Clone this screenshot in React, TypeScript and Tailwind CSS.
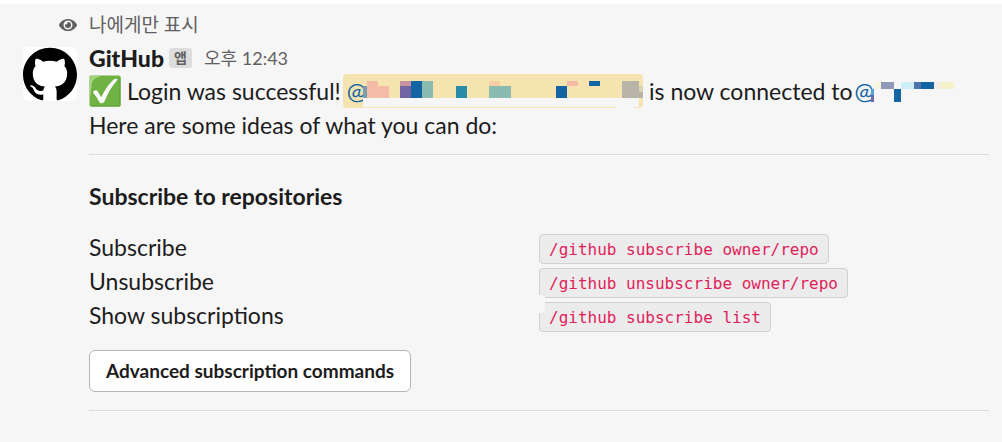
import React from "react";
import { FaEye } from "react-icons/fa";
import { SiGithub } from "react-icons/si";

type Block = [x: number, y: number, width: number, height: number, color: string];

const accountBlocks: Block[] = [
  [0, 24, 276, 9, "#f6f6f6"],
  [253, 33, 18, 1, "#f6f6f6"],
  [0, 12, 4, 12, "#7a9db0"],
  [4, 7, 11, 17, "#f4bba7"],
  [15, 12, 11, 12, "#f4bba7"],
  [37, 7, 11, 5, "#c893a1"],
  [37, 12, 11, 12, "#7264a2"],
  [48, 7, 11, 17, "#1264a3"],
  [59, 7, 11, 17, "#89bbb0"],
  [93, 12, 11, 12, "#268ca9"],
  [126, 7, 11, 5, "#f7cda5"],
  [126, 12, 22, 12, "#89bbb0"],
  [193, 12, 11, 12, "#1264a3"],
  [204, 7, 11, 5, "#f4bba7"],
  [226, 7, 11, 5, "#1264a3"],
  [259, 7, 17, 17, "#b8b4a8"],
  [276, 12, 4, 6, "#d6d6b2"],
  [276, 18, 4, 6, "#b8b4a8"],
];

const userBlocks: Block[] = [
  [0, 15, 3, 6, "#50a5dc"],
  [0, 21, 3, 7, "#7069a8"],
  [3, 8, 7, 7, "#f5f5e0"],
  [10, 8, 13, 7, "#9099b9"],
  [23, 15, 7, 13, "#1264a3"],
  [30, 8, 13, 7, "#d0eef8"],
  [43, 8, 7, 7, "#4d75aa"],
  [50, 8, 13, 7, "#1264a3"],
  [63, 8, 7, 7, "#f6eee6"],
  [70, 8, 13, 7, "#f6f2cc"],
];

const commands = [
  { label: "Subscribe", command: "/github subscribe owner/repo" },
  { label: "Unsubscribe", command: "/github unsubscribe owner/repo" },
  { label: "Show subscriptions", command: "/github subscribe list" },
];

const Blocks = ({ blocks, width }: { blocks: Block[]; width: number }) => (
  <svg
    width={width}
    height={34}
    viewBox={`0 0 ${width} 34`}
    className="-ml-[3px] shrink-0"
    shapeRendering="crispEdges"
    aria-hidden="true"
  >
    {blocks.map(([x, y, w, h, color]) => (
      <rect key={`${x}-${y}`} x={x} y={y} width={w} height={h} fill={color} />
    ))}
  </svg>
);

const CheckMark = () => (
  <svg width="32" height="32" viewBox="0 0 32 32" className="shrink-0" aria-hidden="true">
    <rect x="0.5" y="0.5" width="31" height="31" rx="1.5" fill="#70b344" />
    <path d="M1 24V2.500Q1 1 2.500 1H12Q4 3 3 8Z" fill="#a5d27d" />
    <path d="M31.500 2V30Q31.500 31.500 30 31.500H2L3.500 30.500H29Q30.500 30.500 30.500 29V3Z" fill="#5b9a36" />
    <path
      d="M4.300 16.800C5.500 14.800 7.800 14.800 8.800 16.600L12.300 22.300C15.500 15.500 20 8.500 25 4.300C26.400 3.500 28 3.600 28.300 4.200C28.500 4.700 28 5.300 27.500 6C22 12.500 18.200 19.500 15.300 26.800C14.500 28.600 11.300 28.700 10.300 27C8.500 23.500 6.500 20 4.400 18.200Q3.900 17.500 4.300 16.800Z"
      fill="#fbfbfb"
    />
  </svg>
);

const App = () => {
  return (
    <div className="border-t-4 border-white bg-[#f6f6f6] pb-[31px] pl-[23px] pr-[13px] pt-1 font-['Lato','Noto_Sans_CJK_KR',sans-serif] text-[23px] leading-[34px] text-[#1d1c1d]">
      <div className="grid grid-cols-[54px_minmax(0,1fr)] gap-x-3">
        <div className="flex items-center justify-end text-[#616061]">
          <FaEye size={18} />
        </div>
        <div className="text-[19px] text-[#616061]">나에게만 표시</div>

        <div className="mt-[5px] flex h-[54px] w-[54px] items-center justify-center rounded-md bg-white">
          <SiGithub size={54} className="text-black" />
        </div>
        <div>
          <div className="flex h-8 items-center">
            <span className="font-black">GitHub</span>
            <span className="ml-[5px] flex h-5 w-[23px] items-center justify-center rounded-[3px] bg-[#dddddd] text-sm font-bold text-[#616061]">
              앱
            </span>
            <span className="ml-3 text-lg text-[#616061]">오후 12:43</span>
          </div>

          <div className="flex items-center whitespace-nowrap">
            <CheckMark />
            <span className="ml-1.5">Login was successful!</span>
            <a
              href="#account"
              className="ml-0.5 flex h-[34px] overflow-hidden rounded-[4px] bg-[#f5e3b0] pl-1 text-[#1264a3]"
            >
              @<Blocks blocks={accountBlocks} width={280} />
            </a>
            <span className="ml-1.5">is now connected to</span>
            <a href="#user" className="ml-0.5 flex text-[#1264a3]">
              @<Blocks blocks={userBlocks} width={83} />
            </a>
          </div>
          <p>Here are some ideas of what you can do:</p>

          <hr className="mt-3 border-[#dddddd]" />

          <h2 className="mt-6 font-bold">Subscribe to repositories</h2>
          <dl className="mt-[17px] grid grid-cols-2">
            {commands.map(({ label, command }, index) => (
              <React.Fragment key={label}>
                <dt>{label}</dt>
                <dd className="flex h-[34px] items-center">
                  <code className="relative mt-1 flex h-[30px] items-center whitespace-nowrap rounded-[4px] border border-[#d0d0d0] bg-[#ececec] px-[9px] pt-0.5 font-['DejaVu_Sans_Mono',monospace] text-base text-[#e01e5a]">
                    {command}
                    {index === 2 && (
                      <span className="absolute -left-px -top-2 h-[18px] w-1.5 rounded-r-[4px] bg-[#f6f6f6]" />
                    )}
                  </code>
                </dd>
              </React.Fragment>
            ))}
          </dl>

          <button
            type="button"
            className="mt-[18px] h-[42px] rounded-md border border-[#b5b5b5] bg-white px-4 text-[19px] font-bold"
          >
            Advanced subscription commands
          </button>
          <hr className="mt-[18px] border-[#dddddd]" />
        </div>
      </div>
    </div>
  );
};

export default App;
